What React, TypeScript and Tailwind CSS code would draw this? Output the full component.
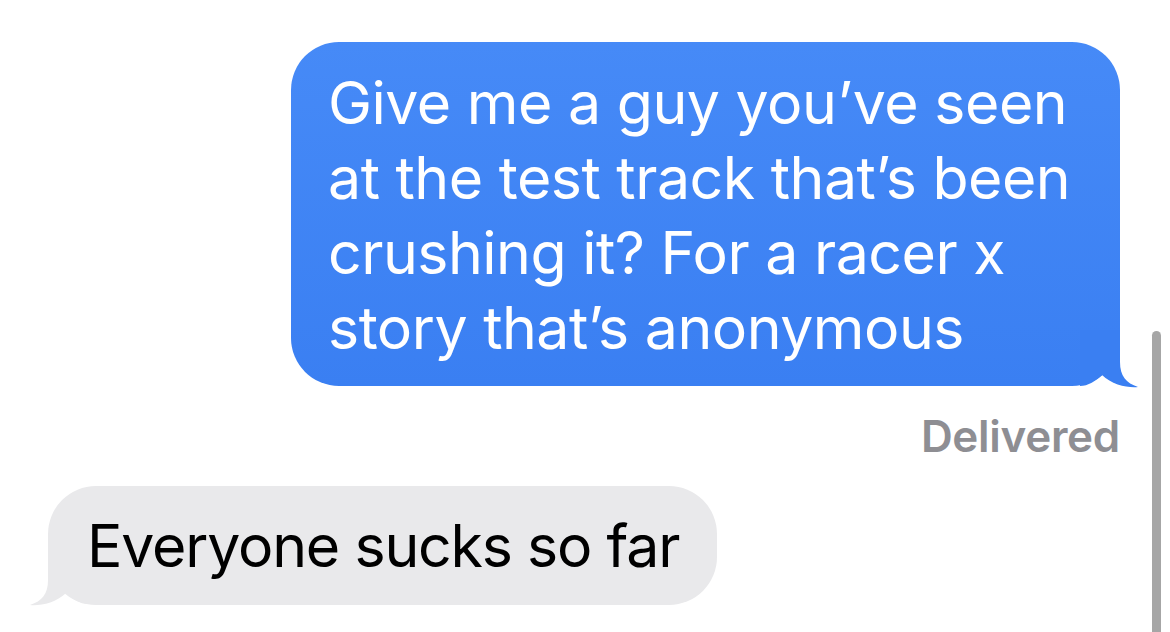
export default function App() {
  return (
    <div
      className="relative w-[1170px] h-[632px] overflow-hidden bg-white flex flex-col pt-[42px]"
      style={{ fontFamily: "Inter, 'Noto Sans', sans-serif" }}
    >
      {/* sent message */}
      <div className="flex justify-end pr-[50px]">
        <div className="relative w-[829px] rounded-[48px] bg-gradient-to-b from-[#468AF7] to-[#3A7FF2] pl-[37px] pr-[30px] pt-[23px] pb-[21px] text-white text-[59px] leading-[75px] tracking-[-0.5px]">
          <p className="relative z-10 whitespace-nowrap">
            Give me a guy you’ve seen
            <br />
            at the test track that’s been
            <br />
            crushing it? For a racer x
            <br />
            story that’s anonymous
          </p>
          <svg
            className="absolute right-[-20px] bottom-[-2px]"
            width="60"
            height="58"
            viewBox="0 0 60 58"
          >
            <path
              d="M0 0 H40 V32 C40 46 46 53 58 57 C48 58 32 55 22 45 C16 51 8 56 0 56 Z"
              fill="#3A7FF2"
            />
          </svg>
        </div>
      </div>

      <div className="flex justify-end pr-[50px] mt-[24px]">
        <span className="text-[44px] leading-[52px] font-semibold text-[#8E8E93] tracking-[-0.3px]">
          Delivered
        </span>
      </div>

      {/* received message */}
      <div className="flex justify-start pl-[48px] mt-[24px]">
        <div className="relative rounded-[48px] bg-[#E9E9EB] pl-[39px] pr-[38px] py-[22px] text-black text-[59px] leading-[75px] tracking-[-1.2px]">
          <p className="relative z-10 whitespace-nowrap">Everyone sucks so far</p>
          <svg
            className="absolute left-[-18px] bottom-[-1px]"
            width="60"
            height="58"
            viewBox="0 0 60 58"
          >
            <path
              d="M58 0 H18 V32 C18 46 12 53 0 57 C10 58 26 55 36 45 C42 51 50 56 58 56 Z"
              fill="#E9E9EB"
            />
          </svg>
        </div>
      </div>

      {/* scroll indicator */}
      <div className="absolute left-[1152px] top-[331px] w-[9px] h-[320px] rounded-full bg-[#A6A6A6]" />
    </div>
  );
}
